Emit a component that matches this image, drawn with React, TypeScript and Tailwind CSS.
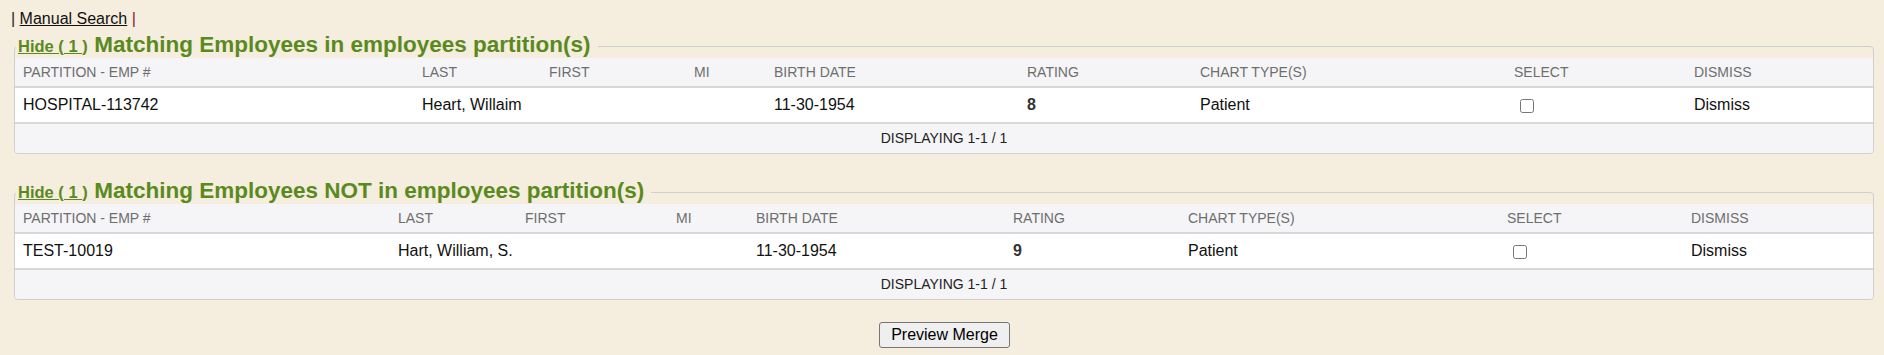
import React from "react";

type Row = {
  partition: string;
  last: string;
  first: string;
  mi: string;
  birth: string;
  rating: string;
  chart: string;
};

const headers = [
  "PARTITION - EMP #",
  "LAST",
  "FIRST",
  "MI",
  "BIRTH DATE",
  "RATING",
  "CHART TYPE(S)",
  "SELECT",
  "DISMISS",
];

function Group({
  title,
  cols,
  row,
  className,
}: {
  title: string;
  cols: string;
  row: Row;
  className: string;
}) {
  const cell = "px-[8px] flex items-center whitespace-nowrap";
  return (
    <fieldset className={"ml-[14px] mr-[10px] border border-[#cfcfcf] rounded-[4px] " + className}>
      <legend className="ml-[1px] pl-[2px] pr-[7px] pb-[1px] leading-[16px] font-bold text-[#5a8a1e] whitespace-nowrap">
        <span className="text-[16.5px]">
          <span className="underline">Hide ( 1 </span>)
        </span>{" "}
        <span className="ml-[2px] text-[22.5px]">{title}</span>
      </legend>
      <div className="mt-[2.5px]">
        <div className={"grid h-[30px] bg-[#f5f5f7] border-b-2 border-[#d8d8d8] " + cols}>
          {headers.map((h) => (
            <div key={h} className={cell + " text-[14px] text-[#6e6e6e]"}>
              {h}
            </div>
          ))}
        </div>
        <div className={"grid h-[36px] bg-white border-b-2 border-[#d8d8d8] text-[16px] text-[#111] " + cols}>
          <div className={cell}>{row.partition}</div>
          <div className={cell}>{row.last}</div>
          <div className={cell}>{row.first}</div>
          <div className={cell}>{row.mi}</div>
          <div className={cell}>{row.birth}</div>
          <div className={cell + " font-bold text-[#333]"}>{row.rating}</div>
          <div className={cell}>{row.chart}</div>
          <div className={cell}>
            <input type="checkbox" className="ml-[6px] mt-[2px] w-[14px] h-[14px]" />
          </div>
          <div className={cell}>Dismiss</div>
        </div>
        <div className="h-[29px] bg-[#f5f5f7] flex items-center justify-center text-[14px] text-[#222] rounded-b-[3px]">
          DISPLAYING 1-1 / 1
        </div>
      </div>
    </fieldset>
  );
}

export default function App() {
  return (
    <div className="min-h-[355px] bg-[#f5eddd] font-['Liberation_Sans',Arial,sans-serif] pt-[10px] pb-[7px]">
      <div className="pl-[11px] text-[16px] leading-[18px] text-[#222]">
        | <span className="underline text-[#111]">Manual Search</span>{" "}
        <span className="text-[#8b1a2b]">|</span>
      </div>
      <Group
        title="Matching Employees in employees partition(s)"
        className="mt-[8.5px]"
        cols="grid-cols-[399px_127px_145px_80px_253px_173px_314px_180px_187px]"
        row={{
          partition: "HOSPITAL-113742",
          last: "Heart, Willaim",
          first: "",
          mi: "",
          birth: "11-30-1954",
          rating: "8",
          chart: "Patient",
        }}
      />
      <Group
        title="Matching Employees NOT in employees partition(s)"
        className="mt-[28.5px]"
        cols="grid-cols-[375px_127px_151px_80px_257px_175px_319px_184px_190px]"
        row={{
          partition: "TEST-10019",
          last: "Hart, William, S.",
          first: "",
          mi: "",
          birth: "11-30-1954",
          rating: "9",
          chart: "Patient",
        }}
      />
      <div className="flex justify-center mt-[22px]">
        <button className="ml-[5px] h-[26px] px-[11px] bg-[#efefef] border border-[#767676] rounded-[3px] text-[16px] text-black leading-[18px]">
          Preview Merge
        </button>
      </div>
    </div>
  );
}
